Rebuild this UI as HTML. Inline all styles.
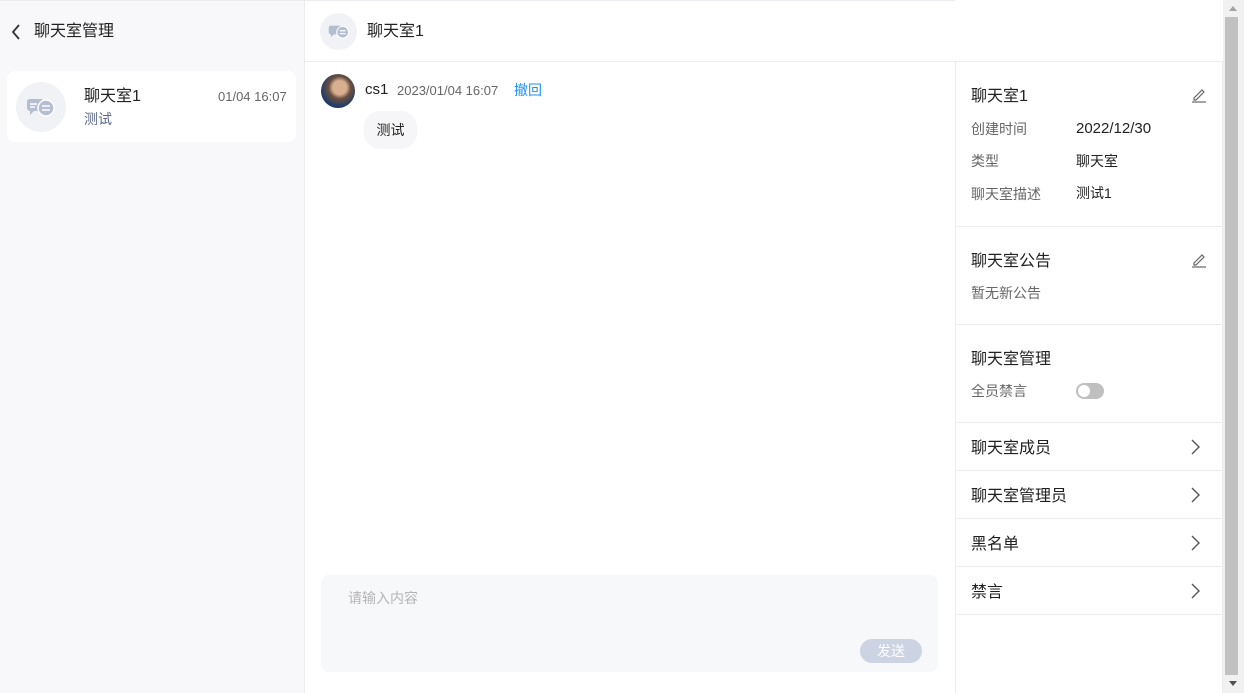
<!DOCTYPE html>
<html><head><meta charset="utf-8"><style>
*{box-sizing:border-box;margin:0;padding:0}
body{width:1244px;height:693px;overflow:hidden;background:#fff;font-family:"Liberation Sans","Noto Sans CJK SC",sans-serif;color:#1f1f1f;position:relative}
.abs{position:absolute;line-height:1.2}
.left{left:0;top:0;width:305px;height:693px;background:#f8f8fa;border-right:1px solid #ececf0;border-top:1px solid #ececf0}
.mid{left:305px;top:0;width:650px;height:693px;border-top:1px solid #ececf0}
.right{left:955px;top:61px;width:268px;height:632px;border-left:1px solid #ececf0;border-right:1px solid #ececf0;border-top:1px solid #ececf0}
.rin{position:absolute;left:0;right:0;top:1px;bottom:0}
.hline{position:absolute;left:0;right:0;height:1px;background:#ececf0}
.av{border-radius:50%;background:#f1f2f6;display:flex;align-items:center;justify-content:center}
.lbl{font-size:14px;color:#666}
.val{font-size:14px;color:#222}
.ttl{font-size:16px;color:#222}
.row{position:absolute;left:0;right:0;height:48px;border-bottom:1px solid #ececf0}
.row span{position:absolute;left:15px;top:16px;font-size:16px;line-height:1.2}
.row svg{position:absolute;right:22px;top:16px}
</style></head><body>
<div class="abs left">
  <svg class="abs" style="left:11px;top:23px" width="10" height="16" viewBox="0 0 10 16"><path d="M8 1L2 8l6 7" fill="none" stroke="#333" stroke-width="1.8"/></svg>
  <div class="abs" style="left:34px;top:21px;font-size:16px;color:#222">聊天室管理</div>
  <div class="abs" style="left:7px;top:70px;width:289px;height:71px;background:#fff;border-radius:8px">
    <div class="abs av" style="left:9px;top:11px;width:50px;height:50px">
      <svg width="30" height="22" viewBox="0 0 30 22"><path d="M3 3h12a3 3 0 0 1 3 3v6a3 3 0 0 1-3 3H8l-4 4v-4a3 3 0 0 1-3-3V6a3 3 0 0 1 2-3z" fill="#b4bdd2"/><circle cx="20" cy="12" r="8" fill="#b4bdd2" stroke="#fff" stroke-width="1.5"/><path d="M16 10h8M16 14h8" stroke="#fff" stroke-width="1.6"/><path d="M4 8h7M4 11h5" stroke="#fff" stroke-width="1.5"/></svg>
    </div>
    <div class="abs" style="left:77px;top:16px;font-size:16px;color:#222">聊天室1</div>
    <div class="abs" style="left:211px;top:18px;font-size:13px;color:#666">01/04 16:07</div>
    <div class="abs" style="left:77px;top:40px;font-size:14px;color:#5d6a8c">测试</div>
  </div>
</div>
<div class="abs mid">
  <div class="abs av" style="left:15px;top:12px;width:37px;height:37px">
    <svg width="22" height="17" viewBox="0 0 30 22"><path d="M3 3h12a3 3 0 0 1 3 3v6a3 3 0 0 1-3 3H8l-4 4v-4a3 3 0 0 1-3-3V6a3 3 0 0 1 2-3z" fill="#b4bdd2"/><circle cx="20" cy="12" r="8" fill="#b4bdd2" stroke="#fff" stroke-width="1.5"/><path d="M16 10h8M16 14h8" stroke="#fff" stroke-width="1.6"/></svg>
  </div>
  <div class="abs" style="left:62px;top:21px;font-size:16px;color:#222">聊天室1</div>
  <div class="hline" style="top:60px"></div>
  <div class="abs" style="left:16px;top:73px;width:34px;height:34px;border-radius:50%;background:radial-gradient(circle at 55% 40%,#d8b090 0 25%,#6a5040 40%,#1e3a6a 70%)"></div>
  <div class="abs" style="left:60px;top:80px;font-size:15px;color:#222">cs1</div>
  <div class="abs" style="left:92px;top:82px;font-size:13px;color:#666">2023/01/04 16:07</div>
  <div class="abs" style="left:209px;top:81px;font-size:14px;color:#1e90ff">撤回</div>
  <div class="abs" style="left:59px;top:110px;width:53px;height:38px;background:#f6f6f8;border-radius:16px;font-size:14px;line-height:38px;text-align:center;color:#222">测试</div>
  <div class="abs" style="left:16px;top:574px;width:617px;height:97px;background:#f7f8fa;border-radius:8px">
    <div class="abs" style="left:27px;top:15px;font-size:14px;color:#b5b5b5">请输入内容</div>
    <div class="abs" style="left:539px;top:64px;width:62px;height:24px;border-radius:12px;background:#ccd3e3;color:#fff;font-size:14px;text-align:center;line-height:24px">发送</div>
  </div>
</div>
<div class="abs right"><div class="rin" style="top:0">
  <div class="abs ttl" style="left:15px;top:25px">聊天室1</div>
  <svg class="abs" style="left:235px;top:25px" width="16" height="16" viewBox="0 0 16 16"><path d="M3 11l8-8 2 2-8 8H3z" fill="none" stroke="#666" stroke-width="1.2"/><path d="M1 15h14" stroke="#666" stroke-width="1.2"/></svg>
  <div class="abs lbl" style="left:15px;top:59px">创建时间</div><div class="abs val" style="left:120px;top:58px;font-size:15px">2022/12/30</div>
  <div class="abs lbl" style="left:15px;top:91px">类型</div><div class="abs val" style="left:120px;top:91px">聊天室</div>
  <div class="abs lbl" style="left:15px;top:124px">聊天室描述</div><div class="abs val" style="left:120px;top:123px">测试1</div>
  <div class="hline" style="top:164px"></div>
  <div class="abs ttl" style="left:15px;top:190px">聊天室公告</div>
  <svg class="abs" style="left:235px;top:190px" width="16" height="16" viewBox="0 0 16 16"><path d="M3 11l8-8 2 2-8 8H3z" fill="none" stroke="#666" stroke-width="1.2"/><path d="M1 15h14" stroke="#666" stroke-width="1.2"/></svg>
  <div class="abs lbl" style="left:15px;top:223px">暂无新公告</div>
  <div class="hline" style="top:262px"></div>
  <div class="abs ttl" style="left:15px;top:288px">聊天室管理</div>
  <div class="abs lbl" style="left:15px;top:321px">全员禁言</div>
  <div class="abs" style="left:120px;top:321px;width:28px;height:16px;border-radius:8px;background:#bfbfbf"><div class="abs" style="left:2px;top:2px;width:12px;height:12px;border-radius:50%;background:#fff"></div></div>
  <div class="hline" style="top:360px"></div>
  <div class="row" style="top:361px"><span>聊天室成员</span><svg width="9" height="16" viewBox="0 0 9 16"><path d="M1 1l7 7-7 7" fill="none" stroke="#555" stroke-width="1.4"/></svg></div>
  <div class="row" style="top:409px"><span>聊天室管理员</span><svg width="9" height="16" viewBox="0 0 9 16"><path d="M1 1l7 7-7 7" fill="none" stroke="#555" stroke-width="1.4"/></svg></div>
  <div class="row" style="top:457px"><span>黑名单</span><svg width="9" height="16" viewBox="0 0 9 16"><path d="M1 1l7 7-7 7" fill="none" stroke="#555" stroke-width="1.4"/></svg></div>
  <div class="row" style="top:505px"><span>禁言</span><svg width="9" height="16" viewBox="0 0 9 16"><path d="M1 1l7 7-7 7" fill="none" stroke="#555" stroke-width="1.4"/></svg></div>
</div></div>
<div class="abs" style="left:1223px;top:0;width:21px;height:693px;background:#f1f1f1">
  <div class="abs" style="left:6px;top:6px;width:0;height:0;border-left:4px solid transparent;border-right:4px solid transparent;border-bottom:5px solid #a3a3a3"></div>
  <div class="abs" style="left:2px;top:17px;width:13px;height:658px;background:#c1c1c1"></div>
  <div class="abs" style="left:6px;top:681px;width:0;height:0;border-left:4px solid transparent;border-right:4px solid transparent;border-top:5px solid #505050"></div>
</div>
</body></html>
